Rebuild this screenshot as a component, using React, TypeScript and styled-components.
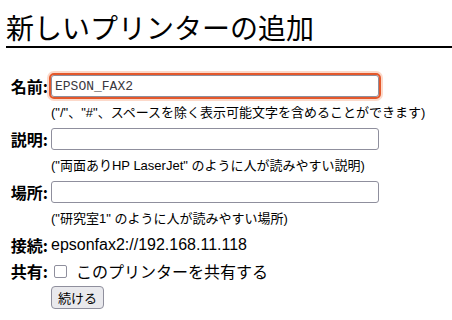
import React from "react";
import styled, { createGlobalStyle } from "styled-components";

const GlobalStyle = createGlobalStyle`
  html, body {
    margin: 0;
    padding: 0;
    background: #ffffff;
  }
  body {
    font-family: "Liberation Sans", "Noto Sans CJK JP", sans-serif;
    color: #000000;
  }
`;

const Page = styled.div`
  padding: 0 0 0 6px;
`;

const Title = styled.h1`
  margin: 0;
  padding-top: 8px;
  font-size: 28px;
  font-weight: normal;
  line-height: 38px;
  border-bottom: 2px solid #000000;
  font-family: "Noto Sans CJK JP", sans-serif;
`;

const Form = styled.div`
  display: grid;
  grid-template-columns: 38px 1fr;
  column-gap: 3px;
  padding: 27px 0 0 4px;
  align-items: center;
`;

const Label = styled.div<{ $top?: number }>`
  grid-column: 1;
  text-align: right;
  white-space: nowrap;
  font-weight: bold;
  font-size: 16px;
  line-height: 20px;
  margin-top: ${({ $top }) => $top ?? 0}px;
  font-family: "Noto Sans CJK JP", sans-serif;
`;

const Cell = styled.div<{ $top?: number }>`
  grid-column: 2;
  display: flex;
  align-items: center;
  margin-top: ${({ $top }) => $top ?? 0}px;
`;

const TextInput = styled.input<{ $focused?: boolean }>`
  box-sizing: border-box;
  width: 328px;
  height: 22px;
  margin: 0;
  padding: 0 3px;
  border: 1px solid #8f8f9d;
  border-radius: 3px;
  background: #ffffff;
  font-family: "Liberation Mono", monospace;
  font-size: 13px;
  color: #3a3940;
  outline: ${({ $focused }) => ($focused ? "2px solid #e4582b" : "none")};
  outline-offset: 0;
  box-shadow: ${({ $focused }) =>
    $focused ? "0 0 0 4px #fcd9ca" : "none"};
`;

const Help = styled.div`
  grid-column: 2;
  margin-top: 7px;
  font-size: 13px;
  line-height: 17px;
  white-space: nowrap;
`;

const Value = styled.span`
  font-size: 16px;
  line-height: 20px;
`;

const Check = styled.input.attrs({ type: "checkbox" })`
  appearance: none;
  box-sizing: border-box;
  width: 13px;
  height: 13px;
  margin: 0 9px 0 3px;
  border: 1px solid #8f8f9d;
  border-radius: 2px;
  background: #ffffff;
`;

const CheckText = styled.span`
  font-size: 16px;
  line-height: 20px;
  font-family: "Noto Sans CJK JP", sans-serif;
`;

const Button = styled.button`
  box-sizing: border-box;
  height: 23px;
  padding: 0 6px;
  border: 1px solid #8f8f9d;
  border-radius: 4px;
  background: #e9e9ed;
  color: #000000;
  font-size: 13px;
  font-family: "Noto Sans CJK JP", sans-serif;
`;

export default function App() {
  return (
    <Page>
      <GlobalStyle />
      <Title>新しいプリンターの追加</Title>
      <Form>
        <Label>名前:</Label>
        <Cell>
          <TextInput $focused defaultValue="EPSON_FAX2" />
        </Cell>
        <Help>("/"、"#"、スペースを除く表示可能文字を含めることができます)</Help>

        <Label $top={7}>説明:</Label>
        <Cell $top={7}>
          <TextInput />
        </Cell>
        <Help>("両面ありHP LaserJet" のように人が読みやすい説明)</Help>

        <Label $top={7}>場所:</Label>
        <Cell $top={7}>
          <TextInput />
        </Cell>
        <Help>("研究室1" のように人が読みやすい場所)</Help>

        <Label $top={8}>接続:</Label>
        <Cell $top={8}>
          <Value>epsonfax2://192.168.11.118</Value>
        </Cell>

        <Label $top={6}>共有:</Label>
        <Cell $top={6}>
          <Check />
          <CheckText>このプリンターを共有する</CheckText>
        </Cell>

        <Cell $top={5}>
          <Button>続ける</Button>
        </Cell>
      </Form>
    </Page>
  );
}
